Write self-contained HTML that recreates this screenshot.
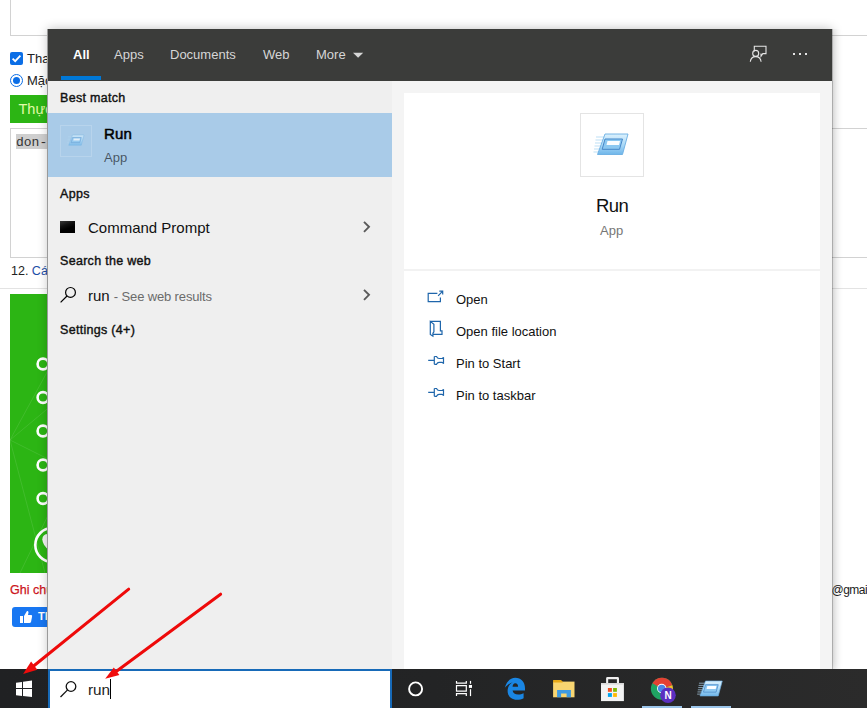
<!DOCTYPE html>
<html><head><meta charset="utf-8">
<style>
*{margin:0;padding:0;box-sizing:border-box}
html,body{width:867px;height:708px;overflow:hidden;background:#fff;font-family:"Liberation Sans",sans-serif;position:relative}
.a{position:absolute}
.t{position:absolute;white-space:nowrap;line-height:1}
.sb{font-weight:normal;-webkit-text-stroke:0.4px currentColor;letter-spacing:0.3px}
</style></head><body>
<svg width="0" height="0" style="position:absolute"><defs>
<linearGradient id="rg" x1="0" y1="0" x2="0" y2="1"><stop offset="0" stop-color="#dcf1fd"/><stop offset=".55" stop-color="#a9d8f6"/><stop offset="1" stop-color="#6fb6ea"/></linearGradient>
<g id="runico">
<g stroke="#b5dbf4" stroke-width=".9"><line x1="6" y1="9" x2="14" y2="9"/><line x1="5.5" y1="12" x2="13" y2="12"/><line x1="5" y1="15" x2="12" y2="15"/><line x1="4.5" y1="18" x2="11" y2="18"/><line x1="4" y1="21" x2="10" y2="21"/><line x1="3.5" y1="24" x2="9" y2="24"/></g>
<polygon points="15,6 38,6 32.5,26.5 7.5,26.5" fill="url(#rg)" stroke="#6aaee2" stroke-width=".9"/>
<polygon points="15,11 32.5,11 29.5,21.3 12.2,21.3" fill="#8cc8f1" stroke="#4787c8" stroke-width="1"/>
<polygon points="17.5,13 30,13 29,17 16.5,17" fill="#fbfdff"/>
</g></defs></svg>
<!-- background page -->
<div class="a" style="left:10px;top:-2px;width:900px;height:38px;border:1px solid #d2d2d2"></div>
<div class="a" style="left:10px;top:52px;width:13px;height:13px;background:#0b6ee6;border-radius:2px"></div>
<svg class="a" style="left:10px;top:52px" width="13" height="13" viewBox="0 0 13 13"><path d="M2.6,6.6L5.2,9.2L10.4,3.6" fill="none" stroke="#fff" stroke-width="1.8"/></svg>
<div class="t" style="left:27px;top:52px;font-size:13px;color:#222">Thay</div>
<div class="a" style="left:10px;top:74px;width:13px;height:13px;border-radius:50%;border:1px solid #0b6ee6;background:#fff"></div>
<div class="a" style="left:13px;top:77px;width:7px;height:7px;border-radius:50%;background:#0b6ee6"></div>
<div class="t" style="left:27px;top:74px;font-size:13px;color:#222">Mặc</div>
<div class="a" style="left:10px;top:95px;width:60px;height:28px;background:#2cb514"></div>
<div class="t" style="left:18.5px;top:101.5px;font-size:14.5px;color:#e2fba8">Thực</div>
<div class="a" style="left:10px;top:128px;width:900px;height:130px;border:1px solid #d2d2d2"></div>
<div class="a" style="left:16px;top:134px;width:40px;height:15px;background:#cfcfcf"></div>
<div class="t" style="left:16px;top:136px;font-size:13px;font-family:'Liberation Mono',monospace;color:#333">don-g</div>
<div class="t" style="left:11px;top:264.5px;font-size:12.5px;color:#222">12. <span style="color:#1c4ea6">Các</span></div>
<div class="a" style="left:0;top:288px;width:867px;height:1px;background:#e3e3e3"></div>
<div class="a" style="left:10px;top:294px;width:60px;height:279px;background:#2cb514"></div>
<svg class="a" style="left:10px;top:294px" width="60" height="279" viewBox="10 294 60 279">
<g stroke="rgba(255,255,255,.1)" stroke-width="1" fill="none">
<line x1="10" y1="440" x2="70" y2="390"/><line x1="10" y1="440" x2="70" y2="330"/><line x1="10" y1="440" x2="70" y2="470"/>
<line x1="10" y1="440" x2="45" y2="573"/><line x1="20" y1="573" x2="70" y2="470"/>
</g>
<g stroke="#fff" stroke-width="2.6" fill="none">
<circle cx="43" cy="364" r="5.4"/><circle cx="43" cy="397.5" r="5.4"/><circle cx="43" cy="431" r="5.4"/><circle cx="43" cy="465" r="5.4"/><circle cx="43" cy="498.5" r="5.4"/>
<circle cx="52.3" cy="545" r="17" stroke-width="2.6"/>
</g>
<path d="M49,534Q42.5,533.5 42.3,539.5Q42.8,545.5 49,550Z" fill="#f4f4f4"/>
</svg>
<div class="t" style="left:10px;top:584px;font-size:12.5px;color:#cc1420;-webkit-text-stroke:0.25px #cc1420">Ghi chú</div>
<div class="a" style="left:12px;top:607px;width:60px;height:20px;background:#1877f2;border-radius:3px"></div>
<svg class="a" style="left:18px;top:609px" width="16" height="16" viewBox="18 609 16 16" fill="#fff">
<rect x="20" y="616" width="3" height="7"/><path d="M24,616L27,611Q28.5,610.5 28.5,612.5L28,615H31.5Q32.5,615.5 32,617L31,622Q30.5,623 29.5,623H24Z"/>
</svg>
<div class="t" style="left:38px;top:611px;font-size:11px;font-weight:bold;color:#fff">Thích</div>
<div class="t" style="left:831.5px;top:584px;font-size:12px;letter-spacing:-0.5px;color:#222">@gmail</div>

<!-- panel shadow -->
<div class="a" style="left:48px;top:29px;width:784px;height:640px;box-shadow:0 0 10px rgba(0,0,0,.25)"></div>
<div class="a" style="left:47px;top:29px;width:1px;height:640px;background:#9a9a9a"></div>
<div class="a" style="left:832px;top:29px;width:16px;height:640px;background:linear-gradient(90deg,rgba(0,0,0,.24) 0,rgba(0,0,0,.24) 1px,rgba(0,0,0,.05) 1px,rgba(0,0,0,.02) 5px,rgba(0,0,0,0) 10px)"></div>
<!-- header -->
<div class="a" style="left:48px;top:29px;width:784px;height:52px;background:#3b3c3a"></div>
<div class="t" style="left:73px;top:48px;font-size:13px;color:#fff;font-weight:bold">All</div>
<div class="a" style="left:61px;top:76px;width:40px;height:4px;background:#0078d7"></div>
<div class="t" style="left:114px;top:48px;font-size:13px;color:#d6d6d6">Apps</div>
<div class="t" style="left:170px;top:48px;font-size:13px;color:#d6d6d6">Documents</div>
<div class="t" style="left:263px;top:48px;font-size:13px;color:#d6d6d6">Web</div>
<div class="t" style="left:316px;top:48px;font-size:13px;color:#d6d6d6">More</div>
<svg class="a" style="left:740px;top:35px" width="80" height="40" viewBox="740 35 80 40">
<g fill="none" stroke="#e6e6e6" stroke-width="1.1">
<path d="M754.3,51.6V46.3H766V53.6H762.8L761,56.2V53.6"/>
<circle cx="755.7" cy="53.4" r="3"/>
<path d="M750.3,61.8Q750.8,56.6 755.7,56.6Q760.6,56.6 761.1,61.8"/>
</g>
<g fill="#e6e6e6"><rect x="793" y="53" width="2" height="2"/><rect x="799" y="53" width="2" height="2"/><rect x="805" y="53" width="2" height="2"/></g>
</svg>
<svg class="a" style="left:350px;top:50px" width="16" height="10" viewBox="350 50 16 10"><polygon points="353,52.8 363.2,52.8 358.1,57.8" fill="#d6d6d6"/></svg>
<!-- left list -->
<div class="a" style="left:48px;top:81px;width:344px;height:588px;background:#efefef"></div>
<div class="a" style="left:392px;top:81px;width:440px;height:588px;background:#f4f4f4"></div>
<div class="a" style="left:404px;top:93px;width:416px;height:576px;background:#fff"></div>
<div class="t sb" style="left:60px;top:92px;font-size:12.5px;color:#111">Best match</div>
<div class="a" style="left:48px;top:113px;width:344px;height:64px;background:#a9cbe8"></div>
<div class="a" style="left:60px;top:125px;width:32px;height:32px;border:1px solid rgba(255,255,255,.18)"></div>
<svg class="a" style="left:65px;top:132px;opacity:.7" width="22" height="16" viewBox="0 0 44 32"><use href="#runico"/></svg>
<div class="t sb" style="left:104px;top:126px;font-size:15px;color:#000;-webkit-text-stroke:0.5px #000;letter-spacing:0.2px">Run</div>
<div class="t" style="left:104px;top:151px;font-size:13px;color:rgba(0,0,0,.6)">App</div>
<div class="t sb" style="left:60px;top:188px;font-size:12.5px;color:#111">Apps</div>
<div class="a" style="left:60px;top:221px;width:15px;height:12px;background:linear-gradient(160deg,#3a3a3a 0,#111 35%,#000 60%)"></div>
<div class="t" style="left:88px;top:220px;font-size:15px;color:#111">Command Prompt</div>
<div class="t sb" style="left:60px;top:255px;font-size:12.5px;color:#111">Search the web</div>
<svg class="a" style="left:48px;top:210px" width="344" height="100" viewBox="48 210 344 100" fill="none">
<g stroke="#5a5a5a" stroke-width="1.9"><path d="M364,221.8L369,226.8L364,231.8"/><path d="M364,289.8L369,294.8L364,299.8"/></g>
<circle cx="70.5" cy="292.4" r="4.9" stroke="#000" stroke-width="1.2"/><line x1="67" y1="296" x2="60.6" y2="302.4" stroke="#000" stroke-width="1.2"/>
</svg>
<div class="t" style="left:88px;top:288px;font-size:15px;color:#111">run <span style="font-size:13px;color:#6b6b6b;letter-spacing:-0.14px">- See web results</span></div>
<div class="t sb" style="left:60px;top:324px;font-size:12.5px;color:#111">Settings (4+)</div>

<div class="a" style="left:404px;top:269px;width:416px;height:2px;background:#f2f2f2"></div>
<div class="a" style="left:580px;top:113px;width:64px;height:64px;border:1px solid #e4e4e4"></div>
<svg class="a" style="left:590px;top:128px" width="44" height="32" viewBox="0 0 44 32"><use href="#runico"/></svg>
<div class="t" style="left:596px;top:197px;font-size:18.5px;letter-spacing:-0.6px;color:#111">Run</div>
<div class="t" style="left:600px;top:224px;font-size:13px;color:#767676">App</div>
<svg class="a" style="left:424px;top:286px" width="24" height="120" viewBox="0 0 24 120" fill="none" stroke="#1f66ab" stroke-width="1.2">
<path d="M13.4,7.3H4.2V15.6H16.4V11.5M14.1,9.9L18.7,5.2M15.3,5.2H18.7V8.6"/>
<path d="M6.3,35.4H16.4V44.8H18V48.4H9.3M6.3,35.4L9.9,38.2V45.8L8.9,47.3V50.2L6.3,48.4Z"/>
<path d="M4.2,74.3H10.3M10.3,70.5V78.3M10.3,70.5H12.5Q13.5,72.5 15,72.5H18Q19,72.5 19.5,71.3V77.7Q19,76.3 18,76.3H15Q13.5,76.3 12.5,78.3H10.3"/>
<path d="M4.2,106.3H10.3M10.3,102.5V110.3M10.3,102.5H12.5Q13.5,104.5 15,104.5H18Q19,104.5 19.5,103.3V109.7Q19,108.3 18,108.3H15Q13.5,108.3 12.5,110.3H10.3"/>
</svg>
<div class="t" style="left:456px;top:293px;font-size:13px;color:#111">Open</div>
<div class="t" style="left:456px;top:325px;font-size:13px;color:#111">Open file location</div>
<div class="t" style="left:456px;top:357px;font-size:13px;color:#111">Pin to Start</div>
<div class="t" style="left:456px;top:389px;font-size:13px;color:#111">Pin to taskbar</div>
<!-- taskbar -->
<div class="a" style="left:0;top:669px;width:867px;height:39px;background:linear-gradient(90deg,#202123 0%,#232425 50%,#2b2b2b 100%)"></div>
<svg class="a" style="left:0;top:669px" width="48" height="39" viewBox="0 669 48 39" fill="#fff">
<polygon points="16,682.8 22,681.9 22,688 16,688"/><polygon points="23,681.7 32,680.6 32,688 23,688"/>
<polygon points="16,689 22,689 22,696 16,695.3"/><polygon points="23,689 32,689 32,697.1 23,696.1"/>
</svg>
<div class="a" style="left:48px;top:669px;width:344px;height:39px;background:#fff;border:2px solid #176ab8;border-bottom:none"></div>
<svg class="a" style="left:56px;top:678px" width="24" height="24" viewBox="56 678 24 24" fill="none" stroke="#111" stroke-width="1.3">
<circle cx="71" cy="686.5" r="4.8"/><line x1="67.6" y1="689.9" x2="60.5" y2="697"/>
</svg>
<div class="t" style="left:88px;top:681.5px;font-size:15.3px;color:#222">run</div>
<div class="a" style="left:110px;top:679px;width:1px;height:20px;background:#000"></div>
<svg class="a" style="left:400px;top:669px" width="467" height="39" viewBox="400 669 467 39">
<circle cx="415.6" cy="688.9" r="6.5" fill="none" stroke="#fff" stroke-width="1.9"/>
<g fill="none" stroke="#fff" stroke-width="1.2" transform="translate(452,678)">
<path d="M4.5,2.9V5.2H14.3V2.9M4.5,18.1V15.7H14.3V18.1M4.5,7.6H14.3V13.2H4.5Z"/>
<line x1="18.5" y1="2.9" x2="18.5" y2="5.8"/><line x1="18.5" y1="11.2" x2="18.5" y2="18.1"/>
<rect x="16.9" y="7" width="3.1" height="2.9" fill="#fff" stroke="none"/>
</g>
<!-- edge -->
<g transform="translate(500,674)">
<path fill="#1a86e3" fill-rule="evenodd" d="M4.8,13.8C6.5,7.5 10.5,3.8 15.2,3.8C21.2,3.8 25,8.2 25,14.2V16.6H12.6C12.9,19.2 15.2,20.6 18.2,20.6C20.2,20.6 22,20 23.6,19.2V24.2C21.6,25.3 19.4,25.8 17,25.8C11.2,25.8 7.6,22 7.6,17C7.6,12.8 9.8,9.6 12.8,8.3C9.8,9.2 6.8,11.2 4.8,13.8ZM12.6,12.7H18.1C18.1,10.6 17.1,9.2 15.3,9.2C13.6,9.2 12.8,10.7 12.6,12.7Z"/>
</g>
<!-- folder -->
<g transform="translate(548,674)">
<rect x="5.1" y="7.6" width="21.4" height="15.7" fill="#f8d571"/>
<path d="M5.1,5.9H13L14.6,7.6V8.6H5.1Z" fill="#e6a817"/>
<path d="M9.1,23.3V15.9H22.9V23.3H18.6V19.5H13.1V23.3Z" fill="#3d9ae2"/>
</g>
<!-- store -->
<g transform="translate(597,674)">
<path d="M9.1,9.1V4.4Q9.1,3 10.5,3H20.6Q22,3 22,4.4V9.1H19.9V5.3H11.2V9.1Z" fill="#f0f0f0"/>
<rect x="4" y="9.1" width="22.9" height="18" fill="#f3f3f3"/>
<rect x="4" y="9.1" width="22.9" height="1.5" fill="#d9d9d9"/>
<rect x="10.9" y="14" width="4" height="3.8" fill="#f25022"/><rect x="16.1" y="14" width="3.8" height="3.8" fill="#7fba00"/>
<rect x="10.9" y="19.1" width="4" height="3.8" fill="#00a4ef"/><rect x="16.1" y="19.1" width="3.8" height="3.8" fill="#ffb900"/>
</g>
<!-- chrome -->
<g>
<circle cx="661.9" cy="688.7" r="11" fill="#1fa463"/>
<path d="M661.9,688.7L652.4,683.2A11,11 0 0 1 672.4,685.2Z" fill="#e34133"/>
<path d="M661.9,688.7L672.4,685.2A11,11 0 0 1 667.4,698.2Z" fill="#f6c026"/>
<circle cx="661.7" cy="688.5" r="4.7" fill="#fff"/>
<circle cx="661.7" cy="688.5" r="3.8" fill="#4a86e8"/>
<circle cx="668" cy="695.3" r="7.8" fill="#5b2fc0"/>
<text x="668" y="699" font-family="Liberation Sans" font-weight="bold" font-size="10" fill="#fff" text-anchor="middle">N</text>
</g>
<!-- run -->
<svg x="694.6" y="676.6" width="32" height="23.4" viewBox="0 0 44 32"><use href="#runico"/></svg>
<rect x="642" y="706" width="40" height="2" fill="#9bc5ea"/>
<rect x="691" y="706" width="40" height="2" fill="#9bc5ea"/>
</svg>

<svg class="a" style="left:0;top:0" width="867" height="708" viewBox="0 0 867 708">
<g stroke="#ee0a0a" stroke-width="3" stroke-linecap="round" fill="#ee0a0a">
<line x1="128.7" y1="589.2" x2="33" y2="666.5"/>
<line x1="220.6" y1="594.2" x2="115.5" y2="672"/>
</g>
<g fill="#f00c0c">
<polygon points="23.1,674 31.1,661.5 37.3,669.8"/>
<polygon points="105.2,678.8 113.8,667.4 119.4,675"/>
</g>
</svg>
</body></html>
